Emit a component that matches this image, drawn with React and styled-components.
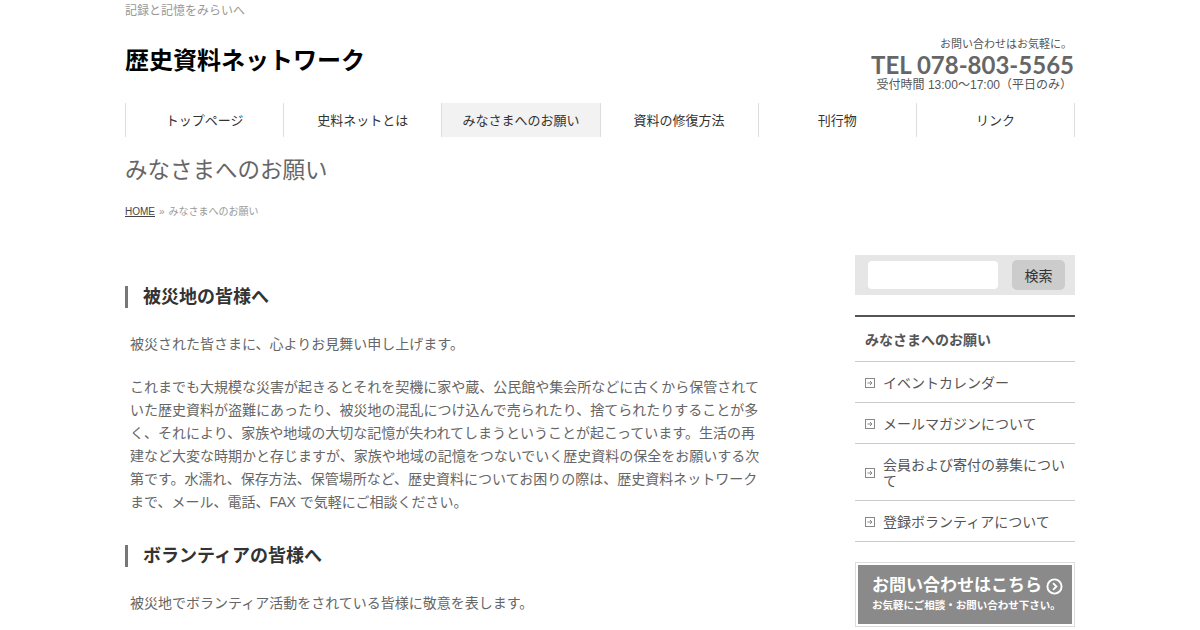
import React from 'react';
import styled, { createGlobalStyle } from 'styled-components';

const GlobalStyle = createGlobalStyle`
  body {
    margin: 0;
    background: #fff;
    font-family: "Liberation Sans", "Noto Sans CJK JP", sans-serif;
    color: #666;
  }
  * {
    box-sizing: border-box;
  }
`;

const navItems = ['トップページ', '史料ネットとは', 'みなさまへのお願い', '資料の修復方法', '刊行物', 'リンク'];
const sideItems = ['イベントカレンダー', 'メールマガジンについて', '会員および寄付の募集について', '登録ボランティアについて'];

const ArrowBox = () => (
  <svg width='10' height='10' viewBox='0 0 10 10'>
    <rect x='0.5' y='0.5' width='9' height='9' fill='none' stroke='#888' strokeWidth='1' />
    <path d='M2.5 5h4.5M5 3l2 2-2 2' fill='none' stroke='#888' strokeWidth='1' />
  </svg>
);

const CircleChevron = () => (
  <svg width='17' height='17' viewBox='0 0 18 18'>
    <circle cx='9' cy='9' r='7.5' fill='none' stroke='#fff' strokeWidth='2' />
    <path d='M7.5 5.5L11 9l-3.5 3.5' fill='none' stroke='#fff' strokeWidth='2' />
  </svg>
);

const App = () => {
  return (
    <Page>
      <GlobalStyle />
      <Tagline>記録と記憶をみらいへ</Tagline>
      <Header>
        <SiteTitle>歴史資料ネットワーク</SiteTitle>
        <Contact>
          <ContactNote>お問い合わせはお気軽に。</ContactNote>
          <Tel>TEL 078-803-5565</Tel>
          <Hours>受付時間 13:00～17:00（平日のみ）</Hours>
        </Contact>
      </Header>
      <Nav>
        {navItems.map((item, i) => (
          <NavItem key={item} $active={i === 2}>
            {item}
          </NavItem>
        ))}
      </Nav>
      <PageTitle>みなさまへのお願い</PageTitle>
      <Breadcrumb>
        <a href='#'>HOME</a>
        <span>»</span>
        みなさまへのお願い
      </Breadcrumb>
      <Columns>
        <Main>
          <Heading>被災地の皆様へ</Heading>
          <Para>被災された皆さまに、心よりお見舞い申し上げます。</Para>
          <Para>
            これまでも大規模な災害が起きるとそれを契機に家や蔵、公民館や集会所などに古くから保管されていた歴史資料が盗難にあったり、被災地の混乱につけ込んで売られたり、捨てられたりすることが多く、それにより、家族や地域の大切な記憶が失われてしまうということが起こっています。生活の再建など大変な時期かと存じますが、家族や地域の記憶をつないでいく歴史資料の保全をお願いする次第です。水濡れ、保存方法、保管場所など、歴史資料についてお困りの際は、歴史資料ネットワークまで、メール、電話、FAX
            で気軽にご相談ください。
          </Para>
          <Heading>ボランティアの皆様へ</Heading>
          <Para>被災地でボランティア活動をされている皆様に敬意を表します。</Para>
        </Main>
        <Sidebar>
          <SearchBox>
            <SearchInput type='text' />
            <SearchButton>検索</SearchButton>
          </SearchBox>
          <Widget>
            <WidgetTitle>みなさまへのお願い</WidgetTitle>
            {sideItems.map((item) => (
              <SideItem key={item}>
                <IconWrap>
                  <ArrowBox />
                </IconWrap>
                <span>{item}</span>
              </SideItem>
            ))}
          </Widget>
          <Banner>
            <BannerInner>
              <BannerMain>
                お問い合わせはこちら
                <CircleChevron />
              </BannerMain>
              <BannerSub>お気軽にご相談・お問い合わせ下さい。</BannerSub>
            </BannerInner>
          </Banner>
        </Sidebar>
      </Columns>
    </Page>
  );
};

export default App;

const Page = styled.div`
  width: 950px;
  margin: 0 auto;
`;
const Tagline = styled.div`
  height: 22px;
  font-size: 12px;
  line-height: 22px;
  color: #999;
`;
const Header = styled.header`
  display: flex;
  justify-content: space-between;
  align-items: flex-start;
  height: 81px;
`;
const SiteTitle = styled.h1`
  margin: 21px 0 0;
  font-size: 24px;
  line-height: 36px;
  font-weight: bold;
  color: #000;
`;
const Contact = styled.div`
  display: flex;
  flex-direction: column;
  align-items: flex-end;
  margin-top: 14px;
  padding-right: 1px;
`;
const ContactNote = styled.div`
  font-size: 11px;
  line-height: 16px;
  color: #555;
  padding-right: 2px;
`;
const Tel = styled.div`
  font-family: Lato, "Liberation Sans", sans-serif;
  font-weight: bold;
  font-size: 24px;
  line-height: 25px;
  color: #666;
`;
const Hours = styled.div`
  font-size: 12px;
  line-height: 16px;
  color: #555;
  padding-right: 2px;
`;
const Nav = styled.nav`
  display: grid;
  grid-template-columns: repeat(6, 1fr);
  height: 34px;
  border-right: 1px solid #ddd;
`;
const NavItem = styled.div`
  display: flex;
  align-items: center;
  justify-content: center;
  padding-bottom: 1px;
  border-left: 1px solid #ddd;
  background: ${(p) => (p.$active ? '#f2f2f2' : '#fff')};
  font-size: 13px;
  color: #333;
`;
const PageTitle = styled.h2`
  margin: 18px 0 0;
  font-size: 22.5px;
  line-height: 32px;
  font-weight: normal;
  color: #666;
`;
const Breadcrumb = styled.div`
  margin-top: 18px;
  font-size: 10px;
  line-height: 14px;
  color: #999;
  & > a {
    color: #444;
  }
  & > span {
    margin: 0 4px;
  }
`;
const Columns = styled.div`
  display: flex;
  justify-content: space-between;
  margin-top: 36px;
`;
const Main = styled.main`
  width: 640px;
`;
const Heading = styled.h3`
  margin: 31px 0 25px;
  padding-left: 15px;
  border-left: 3px solid #777;
  font-size: 18px;
  line-height: 22px;
  font-weight: bold;
  color: #333;
`;
const Para = styled.p`
  margin: 0 0 20px;
  padding: 0 5px;
  font-size: 14px;
  line-height: 23px;
  color: #666;
`;
const Sidebar = styled.aside`
  width: 220px;
`;
const SearchBox = styled.div`
  display: flex;
  align-items: center;
  gap: 14px;
  height: 40px;
  padding: 0 10px 0 13px;
  background: #e6e6e6;
`;
const SearchInput = styled.input`
  width: 130px;
  height: 28px;
  border: none;
  border-radius: 4px;
  background: #fff;
`;
const SearchButton = styled.button`
  width: 53px;
  height: 30px;
  border: none;
  border-radius: 5px;
  background: #ccc;
  font-family: "Liberation Sans", "Noto Sans CJK JP", sans-serif;
  font-size: 14px;
  color: #333;
`;
const Widget = styled.section`
  margin-top: 20px;
  border-top: 2px solid #555;
`;
const WidgetTitle = styled.h4`
  margin: 0;
  padding: 0 10px;
  height: 45px;
  display: flex;
  align-items: center;
  border-bottom: 1px solid #ccc;
  font-size: 14px;
  font-weight: bold;
  color: #555;
`;
const SideItem = styled.div`
  display: flex;
  align-items: center;
  padding: 13px 10px 11px;
  border-bottom: 1px solid #ccc;
  font-size: 14px;
  line-height: 16px;
  color: #555;
`;
const IconWrap = styled.span`
  display: flex;
  flex: none;
  margin-right: 8px;
`;
const Banner = styled.div`
  margin-top: 20px;
  padding: 2px;
  border: 1px solid #ddd;
`;
const BannerInner = styled.div`
  height: 59px;
  padding: 9px 0 0 14px;
  background: #8a8a8a;
  color: #fff;
`;
const BannerMain = styled.div`
  display: flex;
  align-items: center;
  gap: 4px;
  font-size: 17px;
  line-height: 24px;
  font-weight: bold;
`;
const BannerSub = styled.div`
  font-size: 10.5px;
  line-height: 14px;
  font-weight: bold;
`;
